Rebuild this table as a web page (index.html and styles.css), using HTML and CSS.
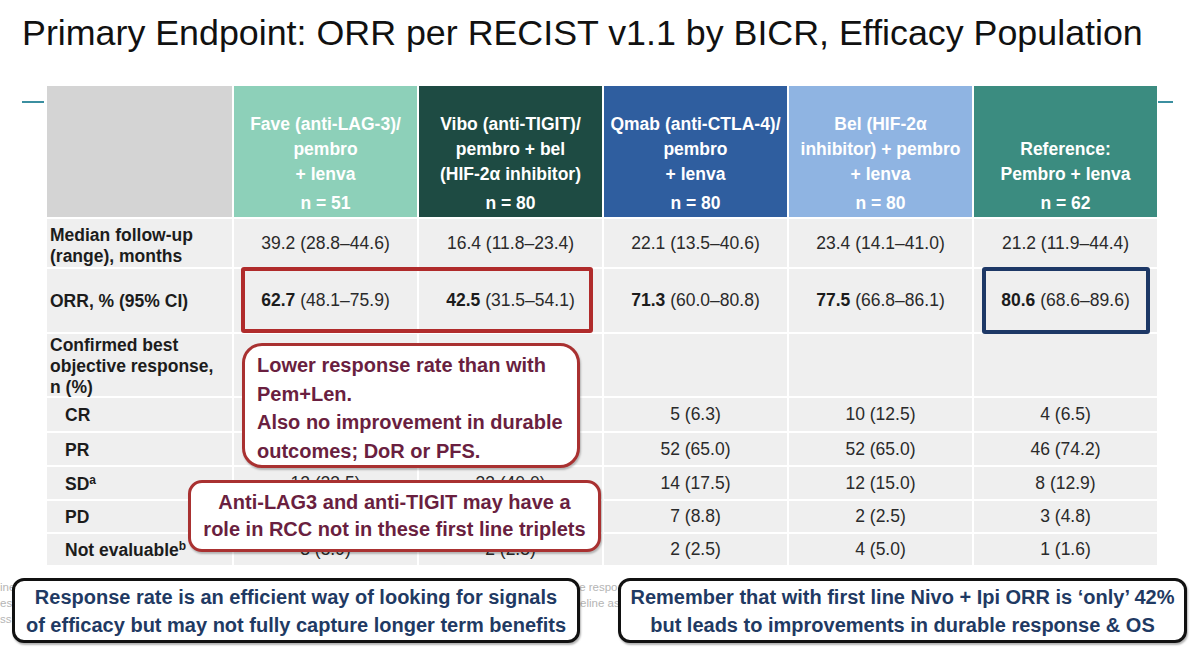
FILE: index.html
```html
<!DOCTYPE html>
<html lang="en">
<head>
<meta charset="utf-8">
<title>Primary Endpoint: ORR per RECIST v1.1 by BICR</title>
<link rel="stylesheet" href="styles.css">
</head>
<body>
<div class="slide">
  <h1 class="title">Primary Endpoint: ORR per RECIST v1.1 by BICR, Efficacy Population</h1>

  <div class="stage">
    <div class="rule rule-left"></div>
    <div class="grid">
      <div class="corner"></div>
      <div class="hcell h-fave"><div class="h-title">Fave (anti-LAG-3)/<br>pembro<br>+ lenva</div><div class="h-n">n = 51</div></div>
      <div class="hcell h-vibo"><div class="h-title">Vibo (anti-TIGIT)/<br>pembro + bel<br>(HIF-2α inhibitor)</div><div class="h-n">n = 80</div></div>
      <div class="hcell h-qmab"><div class="h-title">Qmab (anti-CTLA-4)/<br>pembro<br>+ lenva</div><div class="h-n">n = 80</div></div>
      <div class="hcell h-bel"><div class="h-title">Bel (HIF-2α<br>inhibitor) + pembro<br>+ lenva</div><div class="h-n">n = 80</div></div>
      <div class="hcell h-ref"><div class="h-title">Reference:<br>Pembro + lenva</div><div class="h-n">n = 62</div></div>

      <div class="lab lab-median"><span>Median follow-up<br>(range), months</span></div>
      <div class="val">39.2 (28.8–44.6)</div>
      <div class="val">16.4 (11.8–23.4)</div>
      <div class="val">22.1 (13.5–40.6)</div>
      <div class="val">23.4 (14.1–41.0)</div>
      <div class="val">21.2 (11.9–44.4)</div>

      <div class="lab"><span>ORR, % (95% CI)</span></div>
      <div class="val"><span><b>62.7</b> (48.1–75.9)</span></div>
      <div class="val"><span><b>42.5</b> (31.5–54.1)</span></div>
      <div class="val"><span><b>71.3</b> (60.0–80.8)</span></div>
      <div class="val"><span><b>77.5</b> (66.8–86.1)</span></div>
      <div class="val"><span><b>80.6</b> (68.6–89.6)</span></div>

      <div class="lab"><span>Confirmed best<br>objective response,<br>n (%)</span></div>
      <div class="val"></div>
      <div class="val"></div>
      <div class="val"></div>
      <div class="val"></div>
      <div class="val"></div>

      <div class="lab sub"><span>CR</span></div>
      <div class="val"></div>
      <div class="val"></div>
      <div class="val">5 (6.3)</div>
      <div class="val">10 (12.5)</div>
      <div class="val">4 (6.5)</div>

      <div class="lab sub"><span>PR</span></div>
      <div class="val"></div>
      <div class="val"></div>
      <div class="val">52 (65.0)</div>
      <div class="val">52 (65.0)</div>
      <div class="val">46 (74.2)</div>

      <div class="lab sub"><span>SD<sup>a</sup></span></div>
      <div class="val">12 (23.5)</div>
      <div class="val">33 (40.0)</div>
      <div class="val">14 (17.5)</div>
      <div class="val">12 (15.0)</div>
      <div class="val">8 (12.9)</div>

      <div class="lab sub"><span>PD</span></div>
      <div class="val"></div>
      <div class="val"></div>
      <div class="val">7 (8.8)</div>
      <div class="val">2 (2.5)</div>
      <div class="val">3 (4.8)</div>

      <div class="lab sub"><span>Not evaluable<sup>b</sup></span></div>
      <div class="val">3 (5.9)</div>
      <div class="val">2 (2.5)</div>
      <div class="val">2 (2.5)</div>
      <div class="val">4 (5.0)</div>
      <div class="val">1 (1.6)</div>
    </div>
    <div class="rule rule-right"></div>
  </div>

  <div class="footnote">
    <p>ine; BICR, blinded independent central review; CR, complete response; ORR, objective response rate; PD, disease response.</p>
    <p>es ᵃStable disease was assessed at least 6 weeks after the first dose of study treatment. ᵇPatients with no post-baeline assessment.</p>
    <p>ss post-baseline assessments were not evaluable.</p>
  </div>

  <div class="hl hl-red"></div>
  <div class="hl hl-blue"></div>

  <div class="note note-lower">Lower response rate than with<br>Pem+Len.<br>Also no improvement in durable<br>outcomes; DoR or PFS.</div>
  <div class="note note-role">Anti-LAG3 and anti-TIGIT may have a<br>role in RCC not in these first line triplets</div>

  <div class="key key-left">Response rate is an efficient way of looking for signals<br>of efficacy but may not fully capture longer term benefits</div>
  <div class="key key-right">Remember that with first line Nivo + Ipi ORR is ‘only’ 42%<br>but leads to improvements in durable response &amp; OS</div>
</div>
</body>
</html>
```

FILE: styles.css
```css
* { box-sizing: border-box; }

html, body {
  margin: 0;
  padding: 0;
  background: #ffffff;
}

body {
  font-family: "Liberation Sans", Arial, sans-serif;
  color: #262626;
  overflow: hidden;
}

.slide {
  position: relative;
  width: 1200px;
  height: 652px;
  overflow: hidden;
}

.title {
  margin: 0;
  padding: 13px 0 0 22px;
  font-size: 35.8px;
  line-height: 40px;
  font-weight: normal;
  color: #111111;
  white-space: nowrap;
}

.stage {
  display: flex;
  align-items: flex-start;
  margin-top: 33px;
  padding-left: 22px;
}

.rule {
  height: 2px;
  background: #3b8fa0;
  margin-top: 15px;
}

.rule-left { width: 22px; margin-right: 3px; }
.rule-right { width: 15px; margin-left: 1px; }

.grid {
  display: grid;
  grid-template-columns: 185px repeat(5, 183px);
  grid-template-rows: 131px 48px 63px 62px 33px 32px 32px 31px 31px;
  gap: 2px;
  width: 1110px;
  font-size: 17.5px;
}

.corner { background: #d4d4d4; }

.hcell {
  display: flex;
  flex-direction: column;
  justify-content: flex-end;
  align-items: center;
  text-align: center;
  color: #ffffff;
  font-weight: bold;
  font-size: 17.5px;
  line-height: 25px;
  padding-bottom: 1px;
}

.h-title { margin-bottom: 4px; }

.h-fave { background: #8dd0b9; }
.h-vibo { background: #1e4b43; }
.h-qmab { background: #2f5e9f; }
.h-bel  { background: #8fb4e2; }
.h-ref  { background: #3b8c80; }

.lab {
  background: #efefef;
  font-weight: bold;
  color: #1c1c1c;
  line-height: 21px;
  padding: 2px 0 0 3px;
  display: flex;
  align-items: center;
}

.lab-median { padding-top: 6px; }

.lab.sub { padding-left: 18px; }

.lab sup {
  font-size: 12px;
  line-height: 0;
  vertical-align: 6px;
}

.val {
  background: #efefef;
  display: flex;
  align-items: center;
  justify-content: center;
  color: #2a2a2a;
  white-space: nowrap;
}

.val b { color: #1c1c1c; }

.footnote {
  margin-top: 14px;
  font-size: 11.5px;
  line-height: 16px;
  color: #b5b5b5;
  white-space: nowrap;
}

.footnote p { margin: 0; }

/* overlays */
.hl {
  position: absolute;
  border-radius: 3px;
}

.hl-red {
  left: 241px;
  top: 267px;
  width: 352px;
  height: 66px;
  border: 4px solid #b02b2b;
}

.hl-blue {
  left: 982px;
  top: 267px;
  width: 168px;
  height: 67px;
  border: 4px solid #1d3866;
}

.note {
  position: absolute;
  background: #ffffff;
  border: 3px solid #a93131;
  color: #6a1f40;
  font-weight: bold;
  font-size: 20px;
  box-shadow: 1px 2px 2px rgba(0, 0, 0, 0.25);
}

.note-lower {
  left: 242px;
  top: 343px;
  width: 338px;
  height: 125px;
  border-radius: 20px;
  padding: 5px 0 0 12px;
  line-height: 28.5px;
}

.note-role {
  left: 188px;
  top: 480px;
  width: 413px;
  height: 72px;
  border-radius: 14px;
  display: flex;
  align-items: center;
  justify-content: center;
  text-align: center;
  line-height: 27px;
}

.key {
  position: absolute;
  top: 578px;
  height: 65px;
  background: #ffffff;
  border: 3px solid #111111;
  border-radius: 12px;
  color: #1f3a63;
  font-weight: bold;
  font-size: 20px;
  line-height: 28px;
  display: flex;
  align-items: center;
  justify-content: center;
  text-align: center;
  white-space: nowrap;
  box-shadow: 1px 2px 2px rgba(0, 0, 0, 0.3);
}

.key-left { left: 12px; width: 568px; }
.key-right { left: 618px; width: 569px; }
```
